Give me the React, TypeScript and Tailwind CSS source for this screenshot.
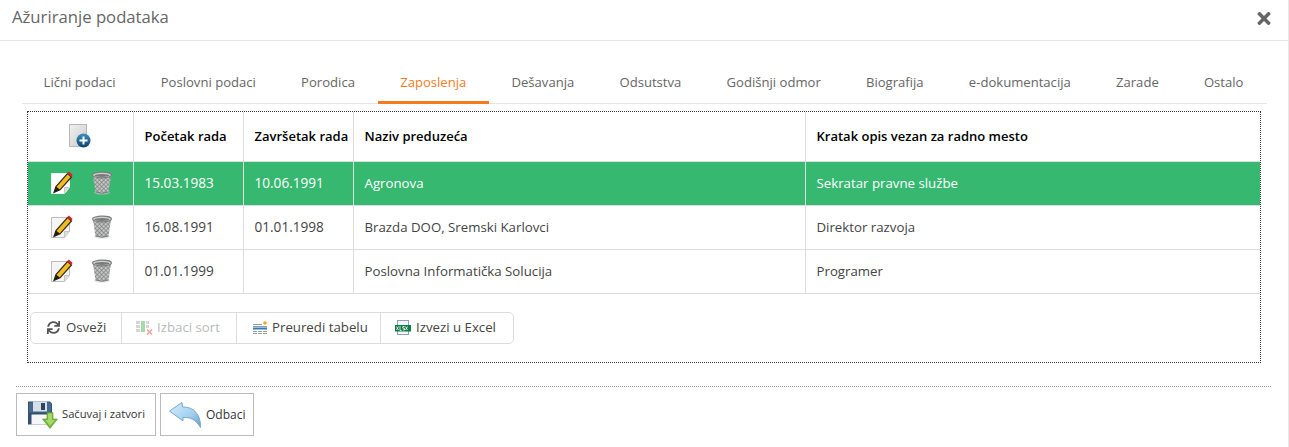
import { FaSync, FaTimes } from "react-icons/fa";

const font = { fontFamily: '"Open Sans", "Liberation Sans", sans-serif' };

const tabs = [
  "Lični podaci",
  "Poslovni podaci",
  "Porodica",
  "Zaposlenja",
  "Dešavanja",
  "Odsutstva",
  "Godišnji odmor",
  "Biografija",
  "e-dokumentacija",
  "Zarade",
  "Ostalo",
];

const rows = [
  ["15.03.1983", "10.06.1991", "Agronova", "Sekratar pravne službe"],
  ["16.08.1991", "01.01.1998", "Brazda DOO, Sremski Karlovci", "Direktor razvoja"],
  ["01.01.1999", "", "Poslovna Informatička Solucija", "Programer"],
];

const AddIcon = () => (
  <svg width="22" height="24" viewBox="0 0 22 24">
    <defs>
      <linearGradient id="pg" x1="0" y1="0" x2="1" y2="1">
        <stop offset="0" stopColor="#f2f2f2" />
        <stop offset="1" stopColor="#c9c9c9" />
      </linearGradient>
      <linearGradient id="ball" x1="0" y1="0" x2="0" y2="1">
        <stop offset="0" stopColor="#3f8fc0" />
        <stop offset="1" stopColor="#0c4468" />
      </linearGradient>
    </defs>
    <rect x="0.500" y="0.500" width="17" height="22" fill="url(#pg)" stroke="#b8b8b8" />
    <circle cx="14.500" cy="16.500" r="7" fill="url(#ball)" />
    <path d="M14.500 12.500v8M10.500 16.500h8" stroke="#fff" strokeWidth="2" />
  </svg>
);

const EditIcon = ({ active }: { active: boolean }) => (
  <svg width="22" height="24" viewBox="0 0 22 24">
    <path
      d="M0.500 2.500h18v14l-5 6h-13z"
      fill={active ? "#fff" : "#f5f5f5"}
      stroke={active ? "#f2f2f2" : "#bdbdbd"}
      strokeWidth="1"
    />
    <path d="M13.500 22.500v-6h5" fill="#ddd" stroke="#bdbdbd" strokeWidth="0.800" />
    <path d="M3 21.500 L5 15.500 L16.500 2.500 L20.500 6 L9 18.800 Z" fill="#f2bb1f" stroke="#2e281c" strokeWidth="1.200" />
    <path d="M3 21.500 L5 15.500 L9 18.800 Z" fill="#1f1b14" />
    <path d="M16 2.500 L17.800 0.500 L21.500 3.800 L20.500 6 Z" fill="#d3222c" />
  </svg>
);

const TrashIcon = () => (
  <svg width="22" height="24" viewBox="0 0 22 24">
    <defs>
      <pattern id="mesh" width="3" height="3" patternUnits="userSpaceOnUse" patternTransform="rotate(45)">
        <rect width="3" height="3" fill="#c6c8c8" />
        <path d="M0 0h3M0 0v3" stroke="#666869" strokeWidth="1" />
      </pattern>
    </defs>
    <ellipse cx="11" cy="21.500" rx="8" ry="2" fill="#cfd1d1" opacity="0.600" />
    <path d="M1.800 4 L4.500 21 Q11 23.500 17.500 21 L20.200 4 Z" fill="url(#mesh)" />
    <ellipse cx="11" cy="4" rx="9.500" ry="2.800" fill="#d2d4d4" stroke="#7c7e7e" strokeWidth="1.200" />
    <ellipse cx="11" cy="4.500" rx="7.500" ry="1.500" fill="#77797a" />
    <path d="M4.500 21 Q11 23.500 17.500 21" fill="none" stroke="#7c7e7e" strokeWidth="1" />
  </svg>
);

const SortIcon = () => (
  <svg width="17" height="15" viewBox="0 0 17 15">
    <path d="M0 1h4v3H0zM0 5h4v3H0zM0 9h4v3H0z" fill="#d6d6d6" />
    <rect x="5" y="1" width="4" height="11" fill="#a5dba8" />
    <path d="M10 1h3v3h-3zM10 5h3v3h-3z" fill="#d6d6d6" />
    <path d="M11 9.500l5 5M16 9.500l-5 5" stroke="#eda0a0" strokeWidth="1.500" />
  </svg>
);

const TableIcon = () => (
  <svg width="16" height="14" viewBox="0 0 16 14">
    <path d="M1 3.500h9M1 5.500h14" stroke="#9a9a9a" strokeWidth="1" />
    <rect x="1" y="6.500" width="14" height="2" fill="#2f7cc4" />
    <path d="M1 10.500h14M1 12.500h14" stroke="#9a9a9a" strokeWidth="1" strokeDasharray="4 1" />
    <circle cx="13" cy="2" r="1.800" fill="#f5a623" />
  </svg>
);

const ExcelIcon = () => (
  <svg width="16" height="15" viewBox="0 0 16 15">
    <rect x="2.500" y="0.500" width="11" height="14" fill="#f4f6fa" stroke="#8f9bb8" />
    <rect x="0" y="5" width="16" height="6.500" fill="#0f7a46" />
    <path d="M1.500 6.500l2 3.500M3.500 6.500l-2 3.500M5 6v4.500h1.500M9.500 6.500H7.800v1.700h1.700V10H7.800M10.500 6.500l2 3.500M12.500 6.500l-2 3.500" stroke="#fff" strokeWidth="0.800" fill="none" />
  </svg>
);

const SaveIcon = () => (
  <svg width="30" height="28" viewBox="0 0 30 28">
    <path d="M0 0.500h22l2 2V23.500H0z" fill="#34506f" />
    <rect x="1" y="1.500" width="22" height="10" fill="#466a90" />
    <rect x="5" y="0.500" width="14" height="10" fill="#d9dfe6" />
    <rect x="13" y="2" width="4" height="7" fill="#2c4560" />
    <rect x="3.500" y="13.500" width="17" height="10" fill="#f5f7f9" />
    <path d="M19 11.500h6v6.500h4.500L22 27.500 14.500 18H19z" fill="#74b53a" stroke="#5b9a2a" strokeWidth="0.600" />
    <path d="M20 12.500h4v6.500h3l-5 6-4.500-6H20z" fill="#a6d968" />
  </svg>
);

const BackIcon = () => (
  <svg width="32" height="26" viewBox="0 0 32 26">
    <defs>
      <linearGradient id="arrow" x1="0" y1="0" x2="1" y2="1">
        <stop offset="0" stopColor="#d8eefc" />
        <stop offset="0.600" stopColor="#9fd0f0" />
        <stop offset="1" stopColor="#5f9fd0" />
      </linearGradient>
    </defs>
    <path
      d="M0.500 9 L13 0.500 L13.500 5 C25 4.500 32 13 31.500 25.500 C27 17.500 21 15 14 15.500 L14 19 Z"
      fill="url(#arrow)"
      stroke="#7fa6c4"
      strokeWidth="1"
    />
  </svg>
);

const App = () => {
  return (
    <div className="flex h-[447px] w-full flex-col overflow-hidden border-r border-[#e8e8e8] bg-white" style={font}>
      <div className="flex h-[41px] justify-between border-b border-[#e5e5e5] pr-[17px] pl-3">
        <span className="mt-2 text-[16.700px] leading-[18px] text-[#666]">Ažuriranje podataka</span>
        <FaTimes className="mt-[9px] h-[19px] w-[14px] text-[#666]" />
      </div>

      <div className="mt-[21px] ml-[22px] flex h-[42px] w-[1245px] border-b border-[#e5e5e5]">
        <div className="-ml-px flex">
          {tabs.map((tab) => {
            const active = tab === "Zaposlenja";
            return (
              <div
                key={tab}
                className={
                  active
                    ? "flex h-[42px] shrink-0 items-center border-b-[3px] border-[#f47b20] px-[22.600px] pt-[3px] text-[13.100px] whitespace-nowrap text-[#f47b20]"
                    : "flex h-[42px] shrink-0 items-center px-[22.600px] text-[13.100px] whitespace-nowrap text-[#666]"
                }
              >
                {tab}
              </div>
            );
          })}
        </div>
      </div>

      <div className="mt-[7px] ml-[27px] h-[252px] w-[1234px] border border-dotted border-[#333]">
        <table className="w-[1232px] table-fixed border-collapse text-[13.250px] text-[#444]">
          <colgroup>
            <col className="w-[105px]" />
            <col className="w-[110px]" />
            <col className="w-[110px]" />
            <col className="w-[452px]" />
            <col />
          </colgroup>
          <thead className="text-[13px]">
            <tr className="h-[49px] border-b border-[#ddd]">
              <th className="border-r border-[#ddd]">
                <div className="flex justify-center">
                  <AddIcon />
                </div>
              </th>
              <th className="border-r border-[#ddd] pt-px pl-[11px] text-left font-semibold text-black">Početak rada</th>
              <th className="border-r border-[#ddd] pt-px pl-[11px] text-left font-semibold text-black">Završetak rada</th>
              <th className="border-r border-[#ddd] pt-px pl-[11px] text-left font-semibold text-black">Naziv preduzeća</th>
              <th className="pt-px pl-[11px] text-left font-semibold text-black">Kratak opis vezan za radno mesto</th>
            </tr>
          </thead>
          <tbody>
            {rows.map((row, key) => {
              const active = key === 0;
              return (
                <tr
                  key={key}
                  className={
                    active
                      ? "h-[44px] border-b border-[#ddd] bg-[#36b870] text-white"
                      : "h-[44px] border-b border-[#ddd]"
                  }
                >
                  <td className="border-r border-[#ddd]">
                    <div className="flex justify-center gap-[18px] pl-[3px]">
                      <EditIcon active={active} />
                      <TrashIcon />
                    </div>
                  </td>
                  <td className="border-r border-[#ddd] pt-px pl-[11px] text-[13.600px]">{row[0]}</td>
                  <td className="border-r border-[#ddd] pt-px pl-[11px] text-[13.600px]">{row[1]}</td>
                  <td className="border-r border-[#ddd] pt-px pl-[11px]">{row[2]}</td>
                  <td className="pt-px pl-[11px]">{row[3]}</td>
                </tr>
              );
            })}
          </tbody>
        </table>

        <div className="mt-[18px] ml-[2px] flex h-[32px] w-[484px] rounded-[5px] border border-[#ddd] text-[13.250px] text-[#444]">
          <div className="flex w-[91px] items-center gap-[6px] border-r border-[#ddd] pl-[16px]">
            <FaSync className="h-[13px] w-[13px] text-[#555]" />
            Osveži
          </div>
          <div className="flex w-[115px] items-center gap-[4px] border-r border-[#ddd] pl-[14px] text-[#bbb]">
            <SortIcon />
            Izbaci sort
          </div>
          <div className="flex w-[144px] items-center gap-[4px] border-r border-[#ddd] pl-[15px]">
            <TableIcon />
            Preuredi tabelu
          </div>
          <div className="flex flex-1 items-center gap-[5px] pl-[14px]">
            <ExcelIcon />
            Izvezi u Excel
          </div>
        </div>
      </div>

      <div className="mt-[23px] ml-[16px] w-[1255px] border-t border-dotted border-[#999]" />

      <div className="mt-[6px] ml-[16px] flex gap-1 text-[#333]">
        <div className="flex h-[43px] w-[140px] items-center gap-[4px] border border-[#bbb] pl-[11px] text-[11.200px] whitespace-nowrap">
          <SaveIcon />
          Sačuvaj i zatvori
        </div>
        <div className="flex h-[43px] w-[94px] items-center gap-[5px] border border-[#bbb] pl-[8px] text-[12px]">
          <BackIcon />
          Odbaci
        </div>
      </div>
    </div>
  );
};

export default App;
